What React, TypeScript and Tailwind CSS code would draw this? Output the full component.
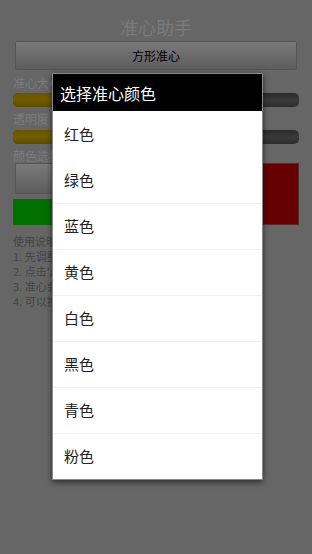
import React from "react";

const font = { fontFamily: '"Noto Sans CJK SC", "Noto Sans", sans-serif' };

function Slider() {
  return (
    <div className="mx-[13px] h-[14px] rounded-[5px] bg-gradient-to-b from-[#2a2a2a] via-[#3a3a3a] to-[#2e2e2e] overflow-hidden flex">
      <div className="w-1/2 h-full bg-gradient-to-b from-[#6a5500] via-[#735d00] to-[#5e4b00] rounded-[5px]" />
    </div>
  );
}

export default function App() {
  const items = ["红色", "绿色", "蓝色", "黄色", "白色", "黑色", "青色", "粉色"];
  return (
    <div className="relative w-[312px] h-[554px] overflow-hidden bg-[#666666]" style={font}>
      {/* dimmed page */}
      <div className="flex flex-col">
        <div className="h-[41px] flex items-end justify-center pb-[2px] text-[18px] leading-[24px] text-[#7a7a7a]">
          准心助手
        </div>
        <div className="mx-[15px] h-[29px] flex items-center justify-center rounded-[2px] border border-[#555] bg-gradient-to-b from-[#7a7a7a] to-[#5d5d5d] text-[12px] text-black">
          方形准心
        </div>
        <div className="mt-[5px] px-[13px] text-[12px] leading-[16px] text-[#7c7c7c]">准心大小</div>
        <div className="mt-[2px]"><Slider /></div>
        <div className="mt-[4px] px-[13px] text-[12px] leading-[16px] text-[#7c7c7c]">透明度</div>
        <div className="mt-[3px]"><Slider /></div>
        <div className="mt-[4px] px-[13px] text-[12px] leading-[16px] text-[#7c7c7c]">颜色选择</div>
        <div className="mt-[-1px] mx-[13px] flex gap-[5px]">
          <div className="flex-1 flex flex-col gap-[5px]">
            <div className="ml-[2px] h-[31px] rounded-[2px] border border-[#555] bg-gradient-to-b from-[#7a7a7a] to-[#5d5d5d]" />
            <div className="h-[26px] bg-[#007000]" />
          </div>
          <div className="w-[62px] h-[62px] bg-[#660000] border border-[#5a2a2a]" />
        </div>
        <div className="mt-[9px] px-[13px] text-[11px] leading-[15px] text-[#444]">
          <div>使用说明</div>
          <div>1. 先调整</div>
          <div>2. 点击'启</div>
          <div>3. 准心会</div>
          <div>4. 可以拖</div>
        </div>
      </div>

      {/* dialog */}
      <div className="absolute left-[52px] top-[73px] w-[211px] border border-[#8a8a8a] shadow-[0_2px_6px_rgba(0,0,0,0.6)] bg-white">
        <div className="h-[37px] bg-black flex items-center px-[7px] text-[16px] text-white">选择准心颜色</div>
        {items.map((t, i) => (
          <div
            key={t}
            className={
              "h-[46px] flex items-center px-[11px] text-[15px] text-[#222] " +
              (i > 1 ? "border-t border-[#f0f0f0]" : "")
            }
          >
            {t}
          </div>
        ))}
      </div>
    </div>
  );
}
